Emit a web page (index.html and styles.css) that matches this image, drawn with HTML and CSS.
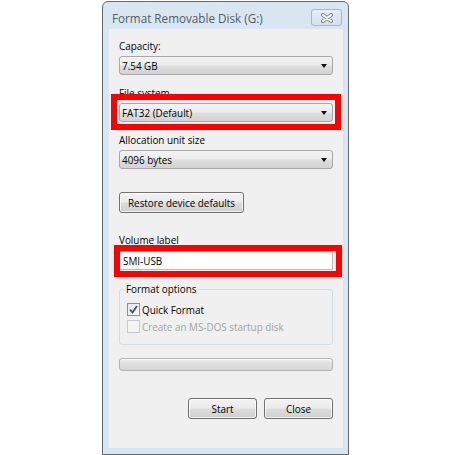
FILE: index.html
```html
<!DOCTYPE html>
<html>
<head>
<meta charset="utf-8">
<link rel="stylesheet" href="styles.css">
</head>
<body>
<div class="page">
  <div class="dialog">
    <div class="titlebar">
      <span class="title">Format Removable Disk (G:)</span>
      <span class="close">
        <svg width="14" height="10" viewBox="0 0 14 10">
          <path d="M3 2 L11 8 M11 2 L3 8" stroke="#7d8896" stroke-width="4" stroke-linecap="round" fill="none"/>
          <path d="M3 2 L11 8 M11 2 L3 8" stroke="#ffffff" stroke-width="2" stroke-linecap="round" fill="none"/>
        </svg>
      </span>
    </div>
    <div class="client">
      <div class="label first">Capacity:</div>
      <div class="combo"><span class="val">7.54 GB</span><span class="arrow"></span></div>

      <div class="label">File system</div>
      <div class="marked">
        <div class="combo"><span class="val">FAT32 (Default)</span><span class="arrow"></span></div>
        <div class="mark mark-combo"></div>
      </div>

      <div class="label">Allocation unit size</div>
      <div class="combo"><span class="val">4096 bytes</span><span class="arrow"></span></div>

      <div class="btn restore">Restore device defaults</div>

      <div class="label vol">Volume label</div>
      <div class="marked">
        <div class="input">SMI-USB</div>
        <div class="mark mark-input"></div>
      </div>

      <fieldset class="group">
        <legend>Format options</legend>
        <div class="row">
          <span class="check checked">
            <svg width="9" height="9" viewBox="0 0 9 9"><path d="M1 4.5 L3.5 7.5 L8 1" stroke="#3d4f86" stroke-width="1.8" fill="none"/></svg>
          </span>
          <span>Quick Format</span>
        </div>
        <div class="row disabled">
          <span class="check"></span>
          <span>Create an MS-DOS startup disk</span>
        </div>
      </fieldset>

      <div class="progress"></div>

      <div class="actions">
        <div class="btn action">Start</div>
        <div class="btn action">Close</div>
      </div>
    </div>
  </div>
</div>
</body>
</html>
```
FILE: styles.css
```css
html, body {
  margin: 0;
  padding: 0;
  background: #ffffff;
}

.page {
  padding: 1px 0 0 102px;
  font-family: "Open Sans", "Noto Sans", sans-serif;
  font-size: 9.9px;
  color: #000;
}

.dialog {
  width: 247px;
  height: 454px;
  box-sizing: border-box;
  border: 1px solid #606a75;
  border-radius: 6px 6px 0 0;
  background: #dae5f2;
  padding: 0 5px 6px 6px;
  display: flex;
  flex-direction: column;
}

.titlebar {
  height: 27px;
  flex: none;
  display: flex;
  justify-content: space-between;
  align-items: flex-start;
}

.title {
  margin: 9px 0 0 3px;
  font-size: 11.7px;
  line-height: 14px;
  color: #515d69;
}

.close {
  margin: 7px 1px 0 0;
  width: 31px;
  height: 17px;
  box-sizing: border-box;
  border: 1px solid #a9b6c6;
  border-radius: 3px;
  background: linear-gradient(#e4ecf6, #d6e1ee);
  display: flex;
  align-items: center;
  justify-content: center;
}

.close svg { display: block; }

.client {
  flex: 1;
  background: #f0f0f0;
  padding: 10px 10px 0;
  display: flex;
  flex-direction: column;
}

.label {
  line-height: 14px;
  height: 14px;
  margin-top: 11px;
}
.label.first { margin-top: 0; }
.label.vol { margin-top: 20px; }

.combo {
  margin-top: 3px;
  height: 19px;
  box-sizing: border-box;
  border: 1px solid #a8a8a8;
  border-radius: 3px;
  background: linear-gradient(#f3f3f3 0%, #ececec 48%, #dfdfdf 52%, #d2d2d2 100%);
  display: flex;
  align-items: center;
  justify-content: space-between;
  padding: 0 5px 0 2px;
}

.val { line-height: 14px; }

.arrow {
  width: 0;
  height: 0;
  border-left: 3.5px solid transparent;
  border-right: 3.5px solid transparent;
  border-top: 4px solid #111;
}

.marked {
  position: relative;
}

.mark {
  position: absolute;
  border: 6px solid #ff0000;
  pointer-events: none;
}
.mark-combo {
  left: -8px;
  right: -8px;
  top: -6px;
  bottom: -8px;
}
.mark-input {
  left: -5px;
  right: -9px;
  top: -2px;
  bottom: -7px;
}

.btn {
  height: 21px;
  box-sizing: border-box;
  border: 1px solid #707070;
  border-radius: 3px;
  background: linear-gradient(#f2f2f2 0%, #ebebeb 48%, #dddddd 52%, #cfcfcf 100%);
  box-shadow: inset 0 0 0 1px rgba(255,255,255,0.7);
  display: flex;
  align-items: center;
  justify-content: center;
  line-height: 14px;
}

.restore {
  margin-top: 23px;
  width: 125px;
}

.input {
  margin-top: 4px;
  height: 19px;
  box-sizing: border-box;
  border: 1px solid #b4b8bf;
  border-top-color: #9a9ea6;
  background: #fff;
  padding: 0 0 0 3px;
  display: flex;
  align-items: center;
  line-height: 14px;
}

.group {
  margin: 12px 0 0;
  padding: 0 5px 9px 5px;
  border: 1px solid #d5dde4;
  border-radius: 3px;
  min-width: 0;
}

.group legend {
  padding: 0 1px;
  line-height: 14px;
}

.row {
  display: flex;
  align-items: center;
  height: 17px;
  margin-left: 2px;
  gap: 2px;
}
.row:first-of-type { margin-top: 5px; }

.check {
  width: 13px;
  height: 13px;
  box-sizing: border-box;
  border: 1px solid #8f8f8f;
  background: linear-gradient(135deg, #dcdcdc, #fbfbfb);
  display: flex;
  align-items: center;
  justify-content: center;
}
.check.checked { background: linear-gradient(135deg, #e4e4e4, #ffffff); }

.row.disabled { color: #a3a3a3; }
.row.disabled .check {
  border-color: #c8c8c8;
  background: #f5f5f5;
}

.progress {
  margin-top: 13px;
  height: 13px;
  box-sizing: border-box;
  border: 1px solid #b3b3b3;
  border-radius: 3px;
  background: linear-gradient(#f4f4f4 0%, #e2e2e2 35%, #d6d6d6 100%);
  box-shadow: inset 0 1px 0 #fbfbfb;
}

.actions {
  margin-top: 27px;
  display: flex;
  justify-content: flex-end;
  gap: 7px;
}

.action { width: 69px; }
```
